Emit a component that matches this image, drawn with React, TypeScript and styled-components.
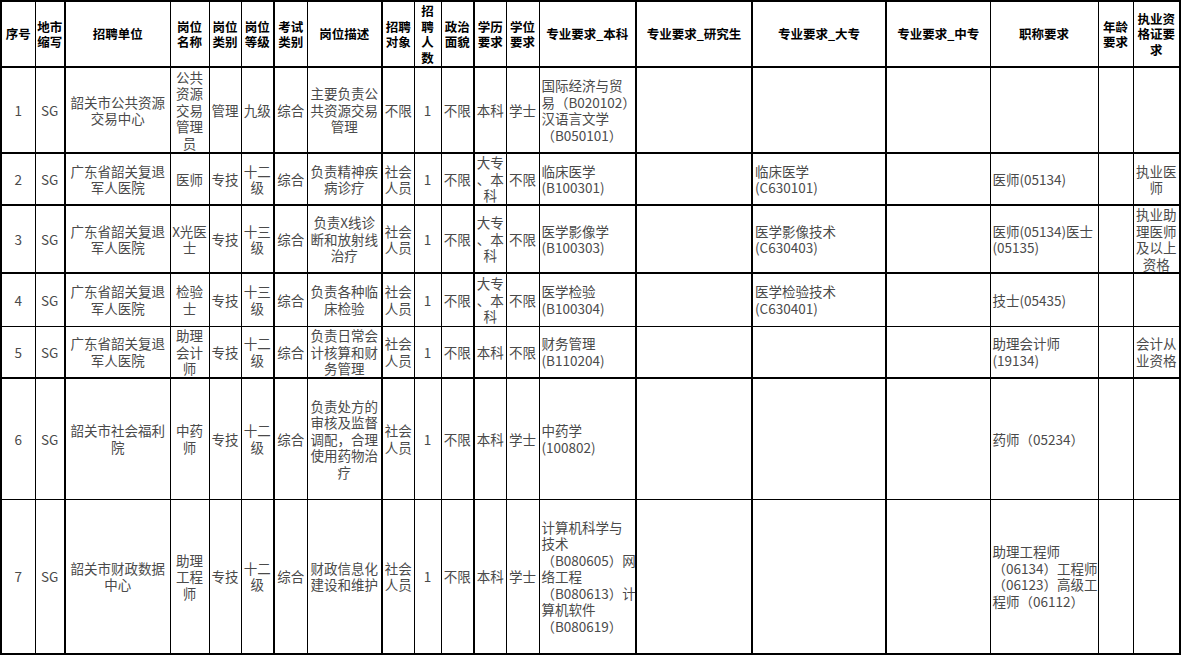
import styled, { createGlobalStyle, css } from 'styled-components';

type Col = {
  w: number;
  thick?: boolean;
  left?: boolean;
};

type RowData = {
  h: number;
  thick?: boolean;
  cells: string[];
};

const GlobalStyle = createGlobalStyle`
  html, body {
    margin: 0;
    padding: 0;
    background: #fff;
  }
  body {
    font-family: "Noto Sans CJK SC", "Noto Sans", sans-serif;
  }
`;

const Sheet = styled.table`
  border-collapse: collapse;
  table-layout: fixed;
  width: 1179px;
  border: 2px solid #000;
`;

const Row = styled.tr<{ $h: number; $thick?: boolean }>`
  height: ${({ $h }) => $h}px;
  ${({ $thick }) =>
    $thick &&
    css`
      & > td {
        border-top-width: 2px;
      }
    `}
`;

const HeadCell = styled.th<{ $thick?: boolean }>`
  border: 1px solid #000;
  border-left-width: ${({ $thick }) => ($thick ? 2 : 1)}px;
  border-bottom-width: 2px;
  padding: 0 1px;
  font-size: 12.5px;
  line-height: 15.5px;
  font-weight: 700;
  color: #000;
  text-align: center;
  vertical-align: middle;
  white-space: pre;
  overflow: hidden;
`;

const Cell = styled.td<{ $thick?: boolean; $left?: boolean }>`
  border: 1px solid #000;
  border-left-width: ${({ $thick }) => ($thick ? 2 : 1)}px;
  padding: ${({ $left }) => ($left ? '0 0 0 2px' : '0 1px')};
  font-size: 13.5px;
  line-height: 16.5px;
  color: #4a4a4a;
  text-align: ${({ $left }) => ($left ? 'left' : 'center')};
  vertical-align: middle;
  white-space: pre;
  overflow: hidden;
`;

// column widths as read off the sheet; thick = heavier rule on the left edge
const cols: Col[] = [
  { w: 34 },
  { w: 30 },
  { w: 105, thick: true },
  { w: 39 },
  { w: 32 },
  { w: 33 },
  { w: 33, thick: true },
  { w: 75 },
  { w: 32, thick: true },
  { w: 27 },
  { w: 33 },
  { w: 32, thick: true },
  { w: 33 },
  { w: 97, left: true },
  { w: 116, thick: true },
  { w: 134, thick: true, left: true },
  { w: 104, thick: true },
  { w: 108, left: true },
  { w: 35 },
  { w: 47 },
];

const headers = [
  '序号',
  '地市\n缩写',
  '招聘单位',
  '岗位\n名称',
  '岗位\n类别',
  '岗位\n等级',
  '考试\n类别',
  '岗位描述',
  '招聘\n对象',
  '招\n聘\n人\n数',
  '政治\n面貌',
  '学历\n要求',
  '学位\n要求',
  '专业要求_本科',
  '专业要求_研究生',
  '专业要求_大专',
  '专业要求_中专',
  '职称要求',
  '年龄\n要求',
  '执业资\n格证要\n求',
];

const rows: RowData[] = [
  {
    h: 86,
    cells: [
      '1', 'SG', '韶关市公共资源\n交易中心', '公共\n资源\n交易\n管理\n员', '管理', '九级', '综合',
      '主要负责公\n共资源交易\n管理', '不限', '1', '不限', '本科', '学士',
      '国际经济与贸\n易（B020102）\n汉语言文学\n（B050101）', '', '', '', '', '', '',
    ],
  },
  {
    h: 52,
    thick: true,
    cells: [
      '2', 'SG', '广东省韶关复退\n军人医院', '医师', '专技', '十二\n级', '综合',
      '负责精神疾\n病诊疗', '社会\n人员', '1', '不限', '大专\n、本\n科', '不限',
      '临床医学\n(B100301)', '', '临床医学\n(C630101)', '', '医师(05134)', '', '执业医\n师',
    ],
  },
  {
    h: 68,
    thick: true,
    cells: [
      '3', 'SG', '广东省韶关复退\n军人医院', 'X光医\n士', '专技', '十三\n级', '综合',
      '负责X线诊\n断和放射线\n治疗', '社会\n人员', '1', '不限', '大专\n、本\n科', '不限',
      '医学影像学\n(B100303)', '', '医学影像技术\n(C630403)', '', '医师(05134)医士\n(05135)', '',
      '执业助\n理医师\n及以上\n资格',
    ],
  },
  {
    h: 53,
    thick: true,
    cells: [
      '4', 'SG', '广东省韶关复退\n军人医院', '检验\n士', '专技', '十三\n级', '综合',
      '负责各种临\n床检验', '社会\n人员', '1', '不限', '大专\n、本\n科', '不限',
      '医学检验\n(B100304)', '', '医学检验技术\n(C630401)', '', '技士(05435)', '', '',
    ],
  },
  {
    h: 52,
    cells: [
      '5', 'SG', '广东省韶关复退\n军人医院', '助理\n会计\n师', '专技', '十二\n级', '综合',
      '负责日常会\n计核算和财\n务管理', '社会\n人员', '1', '不限', '本科', '不限',
      '财务管理\n(B110204)', '', '', '', '助理会计师\n(19134)', '', '会计从\n业资格',
    ],
  },
  {
    h: 121,
    thick: true,
    cells: [
      '6', 'SG', '韶关市社会福利\n院', '中药\n师', '专技', '十二\n级', '综合',
      '负责处方的\n审核及监督\n调配，合理\n使用药物治\n疗', '社会\n人员', '1', '不限', '本科', '学士',
      '中药学\n(100802)', '', '', '', '药师（05234）', '', '',
    ],
  },
  {
    h: 155,
    cells: [
      '7', 'SG', '韶关市财政数据\n中心', '助理\n工程\n师', '专技', '十二\n级', '综合',
      '财政信息化\n建设和维护', '社会\n人员', '1', '不限', '本科', '学士',
      '计算机科学与\n技术\n（B080605）网\n络工程\n（B080613）计\n算机软件\n（B080619）',
      '', '', '', '助理工程师\n（06134）工程师\n（06123）高级工\n程师（06112）', '', '',
    ],
  },
];

export default function App() {
  return (
    <>
      <GlobalStyle />
      <Sheet>
        <colgroup>
          {cols.map((c, i) => (
            <col key={i} style={{ width: c.w }} />
          ))}
        </colgroup>
        <thead>
          <Row $h={66}>
            {headers.map((h, i) => (
              <HeadCell key={i} $thick={cols[i].thick}>
                {h}
              </HeadCell>
            ))}
          </Row>
        </thead>
        <tbody>
          {rows.map((r, ri) => (
            <Row key={ri} $h={r.h} $thick={r.thick}>
              {r.cells.map((t, ci) => (
                <Cell key={ci} $thick={cols[ci].thick} $left={cols[ci].left}>
                  {t}
                </Cell>
              ))}
            </Row>
          ))}
        </tbody>
      </Sheet>
    </>
  );
}
